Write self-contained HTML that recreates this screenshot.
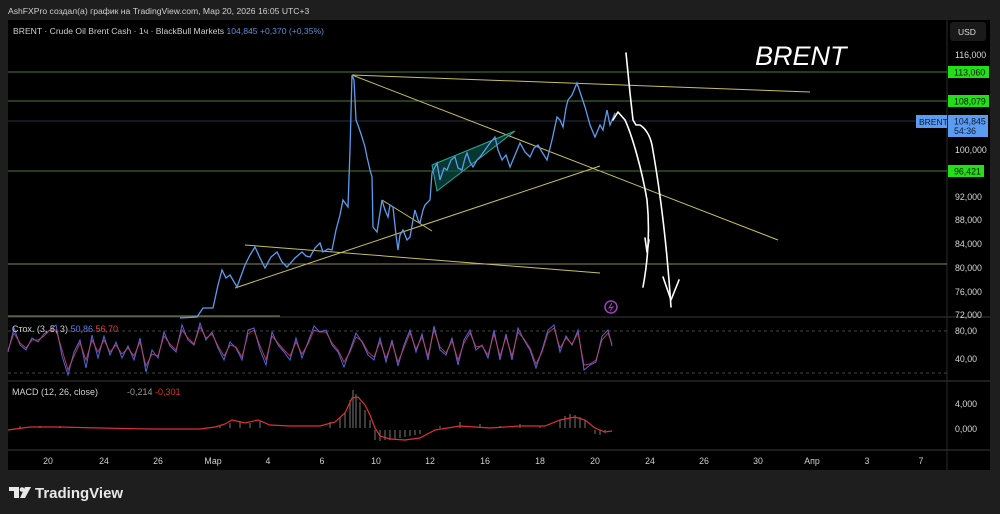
<!DOCTYPE html>
<html><head><meta charset="utf-8"><style>
body{margin:0;width:1000px;height:514px;background:#1e1e1e;overflow:hidden;font-family:"Liberation Sans","Noto Sans CJK SC",sans-serif;}
svg{position:absolute;left:0;top:0}
</style></head><body>
<svg width="1000" height="514" viewBox="0 0 1000 514" font-family="Liberation Sans, DejaVu Sans, sans-serif">
<rect x="8" y="20" width="982" height="450" fill="#000"/>
<text x="8" y="14" fill="#d0d0d0" font-size="8.6">AshFXPro создал(а) график на TradingView.com, Мар 20, 2026 16:05 UTC+3</text>
<line x1="947" y1="20" x2="947" y2="470" stroke="#2a2a2a"/>
<line x1="8" y1="317" x2="990" y2="317" stroke="#3a3a3a"/>
<line x1="8" y1="381" x2="990" y2="381" stroke="#3a3a3a"/>
<line x1="8" y1="450" x2="990" y2="450" stroke="#3a3a3a"/>
<text x="13" y="34" fill="#d0d0d0" font-size="8.6">BRENT · Crude Oil Brent Cash · 1ч · BlackBull Markets <tspan fill="#5b8fd6">104,845</tspan> <tspan fill="#5b8fd6">+0,370 (+0,35%)</tspan></text>
<line x1="8" y1="72" x2="947" y2="72" stroke="#4a7a3a"/>
<line x1="8" y1="101" x2="947" y2="101" stroke="#4a7a3a"/>
<line x1="8" y1="121" x2="947" y2="121" stroke="#2a2f45"/>
<line x1="8" y1="171" x2="947" y2="171" stroke="#4a7a3a"/>
<line x1="8" y1="264" x2="947" y2="264" stroke="#8a8a5a"/>
<line x1="8" y1="316" x2="280" y2="316" stroke="#8a8a5a"/>
<g stroke="#c8c060" stroke-width="1" fill="none">
<line x1="352" y1="75" x2="810" y2="92"/>
<line x1="352" y1="75" x2="778" y2="240"/>
<line x1="235" y1="288" x2="600" y2="166"/>
<line x1="245" y1="245" x2="600" y2="273"/>
<line x1="382" y1="200" x2="432" y2="231"/>
</g>
<polygon points="432,165 515,131 437,191" fill="#0e5a50" fill-opacity="0.6" stroke="#2aa898" stroke-width="1"/>
<polyline fill="none" stroke="#5b9cf0" stroke-width="1.3" points="180,318 197,317 203,308 213,308 218,285 222,270 226,278 230,275 237,287 245,265 250,255 255,247 260,258 265,268 271,257 277,252 282,262 287,267 295,258 302,252 306,256 310,257 315,248 320,243 323,252 328,249 332,250 336,230 340,215 343,200 348,207 350,150 352,75 354,80 356,120 359,128 362,137 365,147 367,157 370,170 372,177 373,227 377,232 382,200 385,210 388,217 390,205 393,207 396,235 398,250 400,235 403,230 407,240 410,237 413,220 415,210 418,220 420,223 423,210 425,205 430,200 432,173 437,163 440,180 444,168 447,170 451,160 455,157 458,168 462,170 465,158 467,153 470,162 473,167 477,160 480,157 485,150 490,143 495,137 498,150 502,160 506,155 510,167 515,155 520,143 525,152 530,157 534,148 538,145 542,152 547,160 552,140 557,117 560,120 563,127 566,108 568,100 572,95 577,83 580,92 585,107 590,125 595,137 600,125 603,130 607,110 610,125 615,113"/>
<g stroke="#fff" stroke-width="1.6" fill="none" stroke-linecap="round" stroke-linejoin="round">
<path d="M613,120 L618,112 L625,120 C632,135 642,170 647,200 C650,230 648,260 643,287"/>
<path d="M645,238 L647,252 L649,240"/>
<path d="M626,53 L630,93 L633,120 L636,125 L640,125 C645,128 650,135 652,145 C660,190 667,247 671,307"/>
<path d="M663,277 L671,300 L679,280"/>
</g>
<text x="755" y="65" fill="#fff" font-size="27" font-style="italic">BRENT</text>
<circle cx="611" cy="307" r="6" fill="none" stroke="#a040c0" stroke-width="1.5"/>
<path d="M612,303 L609,308 L613,307 L610,311" stroke="#a040c0" fill="none" stroke-width="1"/>
<rect x="950" y="22" width="36" height="19" rx="3" fill="#1a1a1a"/>
<text x="958" y="35" fill="#ddd" font-size="8.5">USD</text>
<g fill="#d8d8d8" font-size="8.8">
<text x="955" y="58">116,000</text>
<text x="955" y="153">100,000</text>
<text x="955" y="200">92,000</text>
<text x="955" y="223">88,000</text>
<text x="955" y="247">84,000</text>
<text x="955" y="271">80,000</text>
<text x="955" y="295">76,000</text>
<text x="955" y="318">72,000</text>
<text x="955" y="334">80,00</text>
<text x="955" y="362">40,00</text>
<text x="955" y="407">4,000</text>
<text x="955" y="432">0,000</text>
</g>
<rect x="948" y="66" width="41" height="12" fill="#22e016"/><text x="954" y="75.5" fill="#111" font-size="8.8">113,060</text>
<rect x="948" y="95" width="41" height="12" fill="#22e016"/><text x="954" y="104.5" fill="#111" font-size="8.8">108,079</text>
<rect x="948" y="165" width="36" height="12" fill="#22e016"/><text x="954" y="174.5" fill="#111" font-size="8.8">96,421</text>
<rect x="916" y="115" width="31" height="13" fill="#5b9cf0"/><text x="919" y="125" fill="#0b1a33" font-size="8.5">BRENT</text>
<rect x="948" y="115" width="40" height="22" fill="#5b9cf0"/><text x="954" y="124.5" fill="#0b1a33" font-size="8.8">104,845</text><text x="954" y="134" fill="#0b1a33" font-size="8.8">54:36</text>
<line x1="8" y1="331" x2="947" y2="331" stroke="#444" stroke-dasharray="3,3"/>
<line x1="8" y1="373" x2="947" y2="373" stroke="#444" stroke-dasharray="3,3"/>
<polyline fill="none" stroke="#4a6ae0" stroke-width="1" points="8,352 14,328 20,345 26,350 32,338 38,342 44,334 50,330 56,325 62,356 68,375 74,352 80,340 86,368 92,335 98,358 104,336 110,355 116,342 122,358 128,346 134,360 140,338 146,372 152,350 158,358 164,332 170,346 176,352 182,325 188,340 194,345 200,323 206,340 212,332 218,348 224,360 230,342 236,348 242,360 248,330 254,328 260,350 266,365 272,332 278,345 284,352 290,360 296,338 302,358 308,342 314,326 320,332 326,330 332,345 338,352 344,367 350,350 356,333 362,342 368,355 374,360 380,338 386,362 392,340 398,366 404,345 410,330 416,352 422,334 428,360 434,326 440,350 446,355 452,338 458,365 464,340 470,330 476,350 482,345 488,358 494,330 500,360 506,334 512,360 518,328 524,340 530,350 536,368 542,350 548,330 554,325 560,352 566,336 572,345 578,330 584,370 590,365 596,362 602,336 608,330 612,346"/>
<polyline fill="none" stroke="#d04060" stroke-width="1" opacity="0.85" points="8,350 14,333 20,343 26,348 32,340 38,340 44,336 50,330 56,330 62,350 68,370 74,356 80,343 86,360 92,340 98,352 104,340 110,352 116,345 122,354 128,348 134,356 140,342 146,366 152,354 158,356 164,336 170,344 176,350 182,330 188,338 194,344 200,327 206,338 212,334 218,346 224,356 230,345 236,347 242,357 248,334 254,330 260,346 266,360 272,336 278,343 284,350 290,356 296,342 302,354 308,344 314,330 320,332 326,332 332,343 338,350 344,362 350,352 356,337 362,341 368,352 374,357 380,342 386,358 392,343 398,362 404,348 410,333 416,349 422,337 428,356 434,330 440,347 446,353 452,341 458,360 464,343 470,333 476,347 482,346 488,355 494,334 500,356 506,337 512,356 518,332 524,339 530,348 536,364 542,352 548,333 554,328 560,348 566,338 572,344 578,333 584,365 590,364 596,360 602,340 608,333 612,344"/>
<text x="12" y="332" fill="#d0d0d0" font-size="9">Стох. (3, 5, 3) <tspan fill="#5b7cf0">50,86</tspan> <tspan fill="#e04050">56,70</tspan></text>
<g stroke="#777" stroke-width="1">
<path d="M20,426V428 M40,426V428 M60,426V428 M220,425V428 M230,423V428 M240,421V428 M250,423V428 M260,421V428 M330,422V428 M340,418V428 M345,412V428 M350,400V428 M353,390V428 M356,394V428 M360,402V428 M365,410V428 M370,420V428 M375,430V440 M380,430V441 M385,430V440 M390,430V440 M395,430V439 M400,430V438 M405,430V437 M410,430V436 M415,430V435 M420,430V434 M440,426V428 M460,422V428 M480,424V428 M500,426V428 M520,424V428 M540,426V428 M560,420V428 M565,416V428 M570,414V428 M575,415V428 M580,417V428 M585,420V428 M595,430V434 M600,430V435 M605,430V433"/>
</g>
<polyline fill="none" stroke="#e03030" stroke-width="1.2" points="8,430 30,427 60,427 100,428 150,429 200,429 215,427 225,424 232,420 245,423 258,420 270,425 290,426 320,426 335,422 345,413 352,398 358,397 365,405 370,415 375,428 380,436 390,439 405,440 420,438 435,430 460,426 490,428 520,426 545,426 560,420 575,417 585,420 595,428 605,432 612,431"/>
<text x="12" y="395" fill="#d0d0d0" font-size="9">MACD (12, 26, close)</text>
<text x="127" y="395" fill="#999" font-size="9">-0,214 <tspan fill="#e03030">-0,301</tspan></text>
<g fill="#d0d0d0" font-size="8.8" text-anchor="middle">
<text x="48" y="464">20</text><text x="104" y="464">24</text><text x="158" y="464">26</text><text x="213" y="464">Мар</text><text x="268" y="464">4</text><text x="322" y="464">6</text><text x="376" y="464">10</text><text x="430" y="464">12</text><text x="485" y="464">16</text><text x="540" y="464">18</text><text x="595" y="464">20</text><text x="650" y="464">24</text><text x="704" y="464">26</text><text x="758" y="464">30</text><text x="812" y="464">Апр</text><text x="867" y="464">3</text><text x="921" y="464">7</text>
</g>
<g fill="#e8e8e8">
<path d="M9,487 H19 V498 H14 V491 H9 Z"/>
<circle cx="22" cy="489.5" r="2.3"/>
<path d="M25,487 H31 L25,498 H20 Z"/>
</g>
<text x="35" y="498" fill="#e8e8e8" font-size="15" font-weight="bold">TradingView</text>
</svg>
</body></html>
